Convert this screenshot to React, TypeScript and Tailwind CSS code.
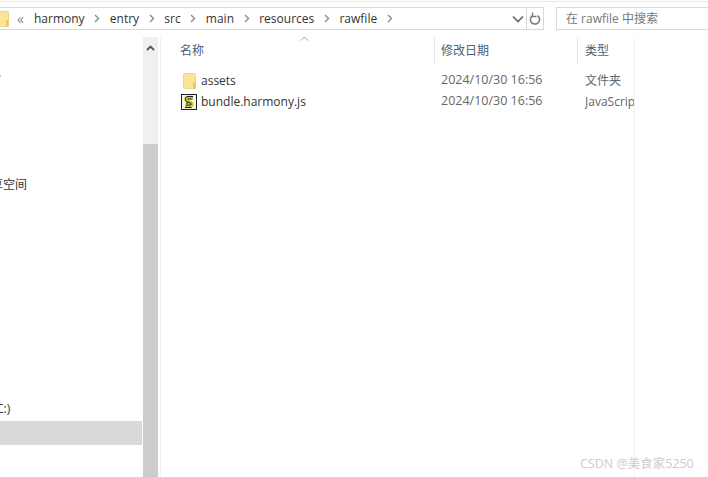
import React from "react";

const font = { fontFamily: '"Open Sans", "Noto Sans CJK SC", sans-serif' };

function Chevron() {
  return (
    <svg width="6" height="9" viewBox="0 0 6 9" className="shrink-0">
      <path d="M1 1l3.5 3.5L1 8" fill="none" stroke="#8a8a8a" strokeWidth="1.4" />
    </svg>
  );
}

function Folder({ className = "" }: { className?: string }) {
  return (
    <svg width="13" height="16" viewBox="0 0 13 16" className={className}>
      <path d="M0.5 1.5a1 1 0 0 1 1-1h10a1 1 0 0 1 1 1V15.5H1.5a1 1 0 0 1-1-1z" fill="#fbe39a" stroke="#ecd689" strokeWidth="1" />
      <path d="M10 9h2.5v6.5H10z" fill="#eec75d" />
    </svg>
  );
}

function ScriptIcon() {
  return (
    <svg width="16" height="16" viewBox="0 0 16 16" className="shrink-0">
      <rect x="0.5" y="0.5" width="15" height="15" fill="#f4f4ec" stroke="#222" />
      <path d="M12 3.5H7C4.5 3.5 4.5 6.5 6.5 7.3L9.5 8.5C11.5 9.3 11 12.3 9 12.3H4" fill="none" stroke="#c9c92a" strokeWidth="3.4" />
      <path d="M12 2.5H7C3.8 2.5 3.5 6.8 6.2 7.8L9.2 9C10.8 9.6 10.6 11 9 11H5M4 13.5h6.5M6.5 5h5M5 9.2h2" fill="none" stroke="#1c1c1c" strokeWidth="1" />
    </svg>
  );
}

function Row({ icon, name, type, iconClass }: { icon: React.ReactNode; name: string; type: string; iconClass: string }) {
  return (
    <div className="flex h-[21px] items-center">
      <div className="flex w-[261px] items-center">
        <div className={iconClass}>{icon}</div>
        <span className="text-[12px] text-[#333333]">{name}</span>
      </div>
      <span className="w-[144px] whitespace-nowrap text-[12.5px] text-[#666666]">2024/10/30 16:56</span>
      <span className="w-[49px] overflow-hidden whitespace-nowrap text-[12px] text-[#666666]">{type}</span>
    </div>
  );
}

export default function App() {
  const crumbs = ["harmony", "entry", "src", "main", "resources", "rawfile"];
  return (
    <div className="relative flex h-[477px] w-[708px] flex-col overflow-hidden bg-white" style={font}>
      <div className="h-[2px] border-b border-[#e6e6e6] bg-white" />
      <div className="flex h-[28px] items-stretch pt-[5px]">
        <div className="flex w-[544px] items-center border border-l-0 border-[#d9d9d9]">
          <Folder className="-ml-[4px] shrink-0" />
          <span className="ml-[8px] mr-[10px] text-[14px] leading-none text-[#8a8a8a]">«</span>
          <div className="flex items-center gap-[9.6px]">
            {crumbs.map((c) => (
              <React.Fragment key={c}>
                <span className="text-[12px] text-[#333333]">{c}</span>
                <Chevron />
              </React.Fragment>
            ))}
          </div>
          <div className="ml-auto flex h-full items-center">
            <svg width="12" height="8" viewBox="0 0 12 8" className="mr-[2px]">
              <path d="M1 1.5l5 5 5-5" fill="none" stroke="#666" strokeWidth="1.6" />
            </svg>
            <div className="flex h-full w-[17px] items-center justify-center border-l border-[#d9d9d9]">
              <svg width="12" height="14" viewBox="0 0 12 14">
                <path d="M8.5 3.6A4.6 4.6 0 1 1 3.5 3.6" fill="none" stroke="#777" strokeWidth="1.5" />
                <path d="M3.5 0.5v4h4" fill="none" stroke="#777" strokeWidth="1.3" />
              </svg>
            </div>
          </div>
        </div>
        <div className="ml-[12px] flex flex-1 items-center border border-r-0 border-[#d9d9d9] pl-[9px] text-[12px] text-[#777777]">
          在 rawfile 中搜索
        </div>
      </div>
      <div className="flex min-h-0 flex-1 pt-[7px]">
        <div className="relative w-[143px] shrink-0">
          <span className="absolute -left-[5px] top-[28px] text-[12px] text-[#333333]">s</span>
          <span className="absolute -left-[9px] top-[139px] text-[12px] text-[#333333]">享空间</span>
          <span className="absolute -left-[4px] top-[363px] text-[12px] text-[#333333]">C:)</span>
          <div className="absolute left-0 top-[384px] h-[24px] w-[142px] bg-[#d9d9d9]" />
        </div>
        <div className="flex w-[15px] shrink-0 flex-col">
          <div className="flex h-[107px] justify-center bg-[#f0f0f0] pt-[8px]">
            <svg width="9" height="6" viewBox="0 0 9 6">
              <path d="M1 5l3.5-3.5L8 5" fill="none" stroke="#555" strokeWidth="1.8" />
            </svg>
          </div>
          <div className="flex-1 bg-[#cdcdcd]" />
        </div>
        <div className="ml-[2px] flex-1 border-l border-[#f2f2f2]">
          <div className="h-full w-[474px] border-r border-[#f2f2f2] pl-[19px]">
            <div className="relative flex h-[28px] items-center text-[12px] text-[#4c607a]">
              <span className="w-[261px]">名称</span>
              <span className="w-[144px]">修改日期</span>
              <span>类型</span>
              <svg width="9" height="5" viewBox="0 0 9 5" className="absolute left-[120px] -top-[1px]">
                <path d="M1 4.5l3.5-3.5L8 4.5" fill="none" stroke="#999" strokeWidth="1" />
              </svg>
              <div className="absolute left-[254px] top-0 h-[27px] w-px bg-[#e5e5e5]" />
              <div className="absolute left-[397px] top-0 h-[27px] w-px bg-[#e5e5e5]" />
            </div>
            <div className="pt-[5px]">
              <Row icon={<Folder />} iconClass="flex w-[21px] pl-[3px]" name="assets" type="文件夹" />
              <Row icon={<ScriptIcon />} iconClass="flex w-[21px] pl-[1px]" name="bundle.harmony.js" type="JavaScript 文件" />
            </div>
          </div>
        </div>
      </div>
      <div className="absolute left-[580px] top-[456px] text-[12.5px] leading-4 text-[#cccccc]">CSDN @美食家5250</div>
    </div>
  );
}
